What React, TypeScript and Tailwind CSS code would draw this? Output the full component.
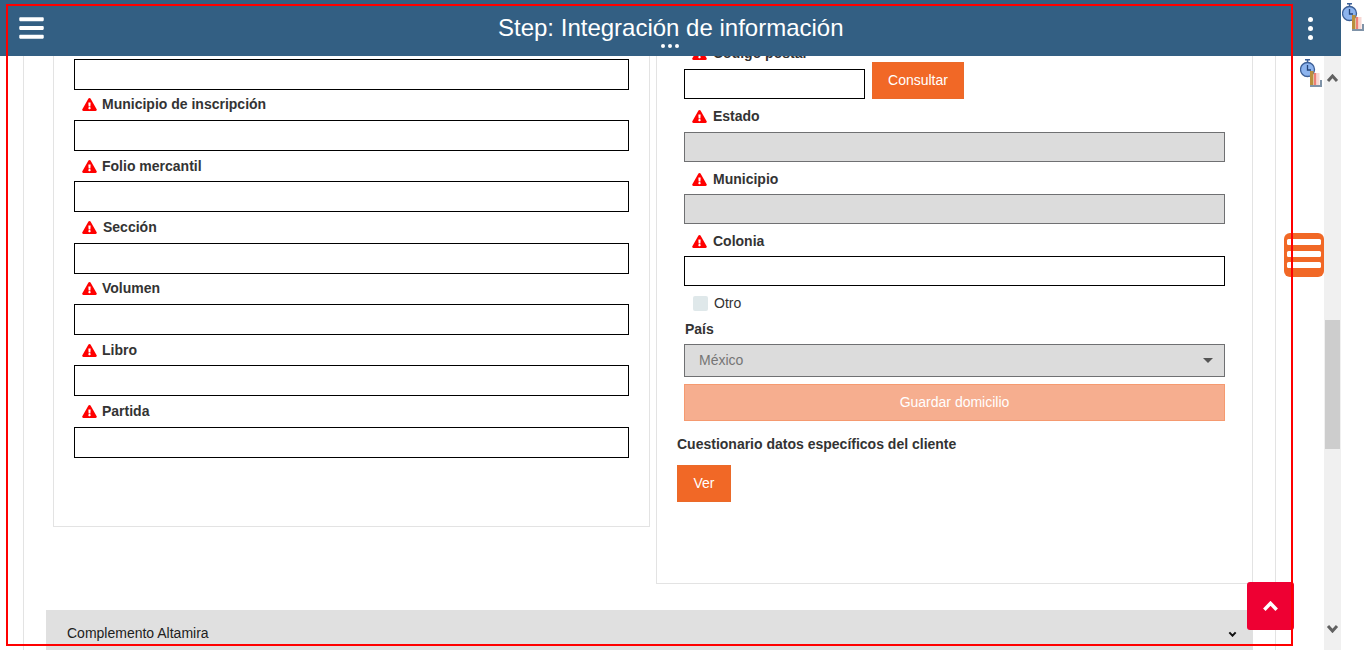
import React from "react";
import { FaBars, FaExclamationTriangle } from "react-icons/fa";

function TimerIcon({ className }: { className: string }) {
	return (
		<svg className={className} width="24" height="28" viewBox="0 0 24 28">
			<rect x="5" y="0" width="5" height="1.5" fill="#3c5f96" />
			<rect x="6.8" y="1" width="1.5" height="2.5" fill="#3c5f96" />
			<circle cx="7.5" cy="10.5" r="7" fill="#8db4ee" stroke="#3c5f96" strokeWidth="1.3" />
			<path d="M7.5 6v5h3.5" fill="none" stroke="#24457a" strokeWidth="1.3" />
			<rect x="10" y="12" width="3.5" height="14" fill="#b98f3c" />
			<rect x="14" y="14" width="2.5" height="12" fill="#ee7f76" />
			<rect x="16.5" y="14" width="3" height="12" fill="#f7d8d4" />
			<rect x="10" y="26" width="12" height="2" fill="#7f93a8" />
			<rect x="20" y="21" width="2" height="7" fill="#7f93a8" />
		</svg>
	);
}

function Chevron({ up, className, width, height, stroke, color }: { up: boolean; className: string; width: number; height: number; stroke: number; color: string }) {
	const inset = stroke / 1.5;
	const points = up
		? `${inset},${height - inset} ${width / 2},${inset} ${width - inset},${height - inset}`
		: `${inset},${inset} ${width / 2},${height - inset} ${width - inset},${inset}`;
	return (
		<svg className={className} width={width} height={height} viewBox={`0 0 ${width} ${height}`}>
			<polyline points={points} fill="none" stroke={color} strokeWidth={stroke} />
		</svg>
	);
}

function RequiredLabel({ text, className, gap = "mr-[5px]" }: { text: string; className: string; gap?: string }) {
	return (
		<div className={"flex items-center text-[14px] font-bold text-[#333] " + className}>
			<FaExclamationTriangle className={"w-[15px] h-[13px] text-[#ff0000] shrink-0 " + gap} />
			<span>{text}</span>
		</div>
	);
}

function TextRow({ label, gap }: { label: string; gap?: string }) {
	return (
		<div>
			<div className="h-[31px] border border-black bg-white" />
			<RequiredLabel text={label} gap={gap} className="h-[30.33px] pl-[8px]" />
		</div>
	);
}

function App() {
	return (
		<div className="relative flex w-[1366px] h-[650px] overflow-hidden bg-white font-['Liberation_Sans',Arial,sans-serif]">
			<div className="relative w-[1324px] h-[650px] overflow-hidden shrink-0">
				<div className="ml-[23px] w-[1253px] h-[650px] border-x border-[#e3e3e3]">
					<div className="flex items-start gap-[6px] pl-[29px]">
						{/* left panel */}
						<div className="w-[597px] h-[527px] border border-t-0 border-[#e3e3e3] pt-[58.8px] px-[20px]">
							<TextRow label="Municipio de inscripción" />
							<TextRow label="Folio mercantil" />
							<TextRow label="Sección" gap="mr-[6px]" />
							<TextRow label="Volumen" />
							<TextRow label="Libro" />
							<TextRow label="Partida" />
							<div className="h-[31px] border border-black bg-white" />
						</div>

						{/* right panel */}
						<div className="w-[597px] h-[584px] border border-t-0 border-[#e3e3e3] pl-[27px] pr-[27px] pt-[44px]">
							<RequiredLabel text="Código postal" gap="mr-[6px]" className="h-[18px] pl-[8px]" />
							<div className="flex items-end gap-[7px]">
								<div className="w-[181px] h-[30px] border border-black bg-white" />
								<button className="w-[92px] h-[37px] bg-[#f16826] border border-[#ea6a2a] text-white text-[14px]">
									Consultar
								</button>
							</div>
							<RequiredLabel text="Estado" gap="mr-[6px]" className="h-[33px] pt-[2px] pl-[8px]" />
							<div className="h-[30px] border border-[#6f7072] bg-[#dcdcdc]" />
							<RequiredLabel text="Municipio" gap="mr-[6px]" className="h-[32px] pt-[2px] pl-[8px]" />
							<div className="h-[30px] border border-[#6f7072] bg-[#dcdcdc]" />
							<RequiredLabel text="Colonia" gap="mr-[6px]" className="h-[32px] pt-[2px] pl-[8px]" />
							<div className="h-[30px] border border-black bg-white" />
							<div className="flex items-center h-[34px] pl-[9px] text-[14px] text-[#333]">
								<div className="w-[15px] h-[15px] rounded-[2px] bg-[#dfe8ea] mr-[6px]" />
								Otro
							</div>
							<div className="h-[24px] pb-[6px] flex items-center pl-[1px] text-[14px] font-bold text-[#333]">País</div>
							<div className="flex items-center justify-between h-[33px] border border-[#6f7072] bg-[#dcdcdc] pl-[14px] pr-[11px] text-[14px] text-[#757575]">
								México
								<span className="w-0 h-0 border-x-[5px] border-x-transparent border-t-[5px] border-t-[#555]" />
							</div>
							<button className="block w-full h-[37px] mt-[7px] bg-[#f6ae8f] border border-[#f59a70] text-white text-[14px]">
								Guardar domicilio
							</button>
							<div className="-ml-[7px] mt-[14px] h-[18px] flex items-center text-[14px] font-bold text-[#333]">
								Cuestionario datos específicos del cliente
							</div>
							<button className="block -ml-[7px] mt-[12px] w-[54px] h-[37px] bg-[#f16826] border border-[#ea6a2a] text-white text-[14px]">
								Ver
							</button>
						</div>
					</div>

					{/* accordion */}
					<div className="ml-[22px] mt-[26px] w-[1207px] h-[40px] bg-[#e0e0e0] flex items-start justify-between pt-[13px] pl-[21px] pr-[16px] text-[14px] text-[#212121]">
						Complemento Altamira
						<Chevron up={false} width={9} height={6} stroke={2} color="#111" className="mt-[8px]" />
					</div>
				</div>
			</div>

			{/* scrollbar */}
			<div className="relative w-[17px] h-[650px] bg-[#f0f0f0] shrink-0">
				<Chevron up width={13} height={9} stroke={3} color="#616161" className="absolute top-[74px] left-[2px]" />
				<div className="absolute top-[320px] left-[1px] w-[15px] h-[129px] bg-[#cdcdcd]" />
				<Chevron up={false} width={13} height={9} stroke={3} color="#616161" className="absolute top-[624px] left-[2px]" />
			</div>

			{/* header over page and scrollbar */}
			<div className="absolute top-0 left-0 w-[1341px] h-[56px] bg-[#335f83] text-white text-[24px]">
				<FaBars className="absolute left-[18px] top-[14px] w-[27px] h-[28px] text-white" />
				<span className="absolute left-[498px] top-[14px] leading-[28px]">Step: Integración de información</span>
				<div className="absolute left-[661px] top-[44px] flex gap-[3px]">
					<span className="w-[4px] h-[4px] rounded-full bg-white" />
					<span className="w-[4px] h-[4px] rounded-full bg-white" />
					<span className="w-[4px] h-[4px] rounded-full bg-white" />
				</div>
				<div className="absolute left-[1308px] top-[17px] flex flex-col gap-[4px]">
					<span className="w-[5px] h-[5px] rounded-full bg-white" />
					<span className="w-[5px] h-[5px] rounded-full bg-white" />
					<span className="w-[5px] h-[5px] rounded-full bg-white" />
				</div>
			</div>

			<TimerIcon className="absolute left-[1300px] top-[59px]" />
			<TimerIcon className="absolute left-[1342px] top-[3px]" />

			{/* floating list button */}
			<svg className="absolute left-[1284px] top-[233px]" width="40" height="44" viewBox="0 0 40 44">
				<rect width="40" height="44" rx="6" fill="#f16826" />
				<rect x="3" y="6" width="34" height="6" rx="1.5" fill="#fff" />
				<rect x="3" y="18" width="34" height="6" rx="1.5" fill="#fff" />
				<rect x="3" y="29" width="34" height="6" rx="1.5" fill="#fff" />
			</svg>

			{/* back to top */}
			<button className="absolute left-[1247px] top-[582px] w-[47px] h-[48px] rounded-[3px] bg-[#ee0033] flex items-center justify-center">
				<Chevron up width={17} height={11} stroke={3.5} color="#fff" />
			</button>

			{/* red frame */}
			<div className="absolute left-[6px] top-[4px] w-[1287px] h-[642px] border-2 border-[#ff0000] pointer-events-none" />
		</div>
	);
}

export default App;
